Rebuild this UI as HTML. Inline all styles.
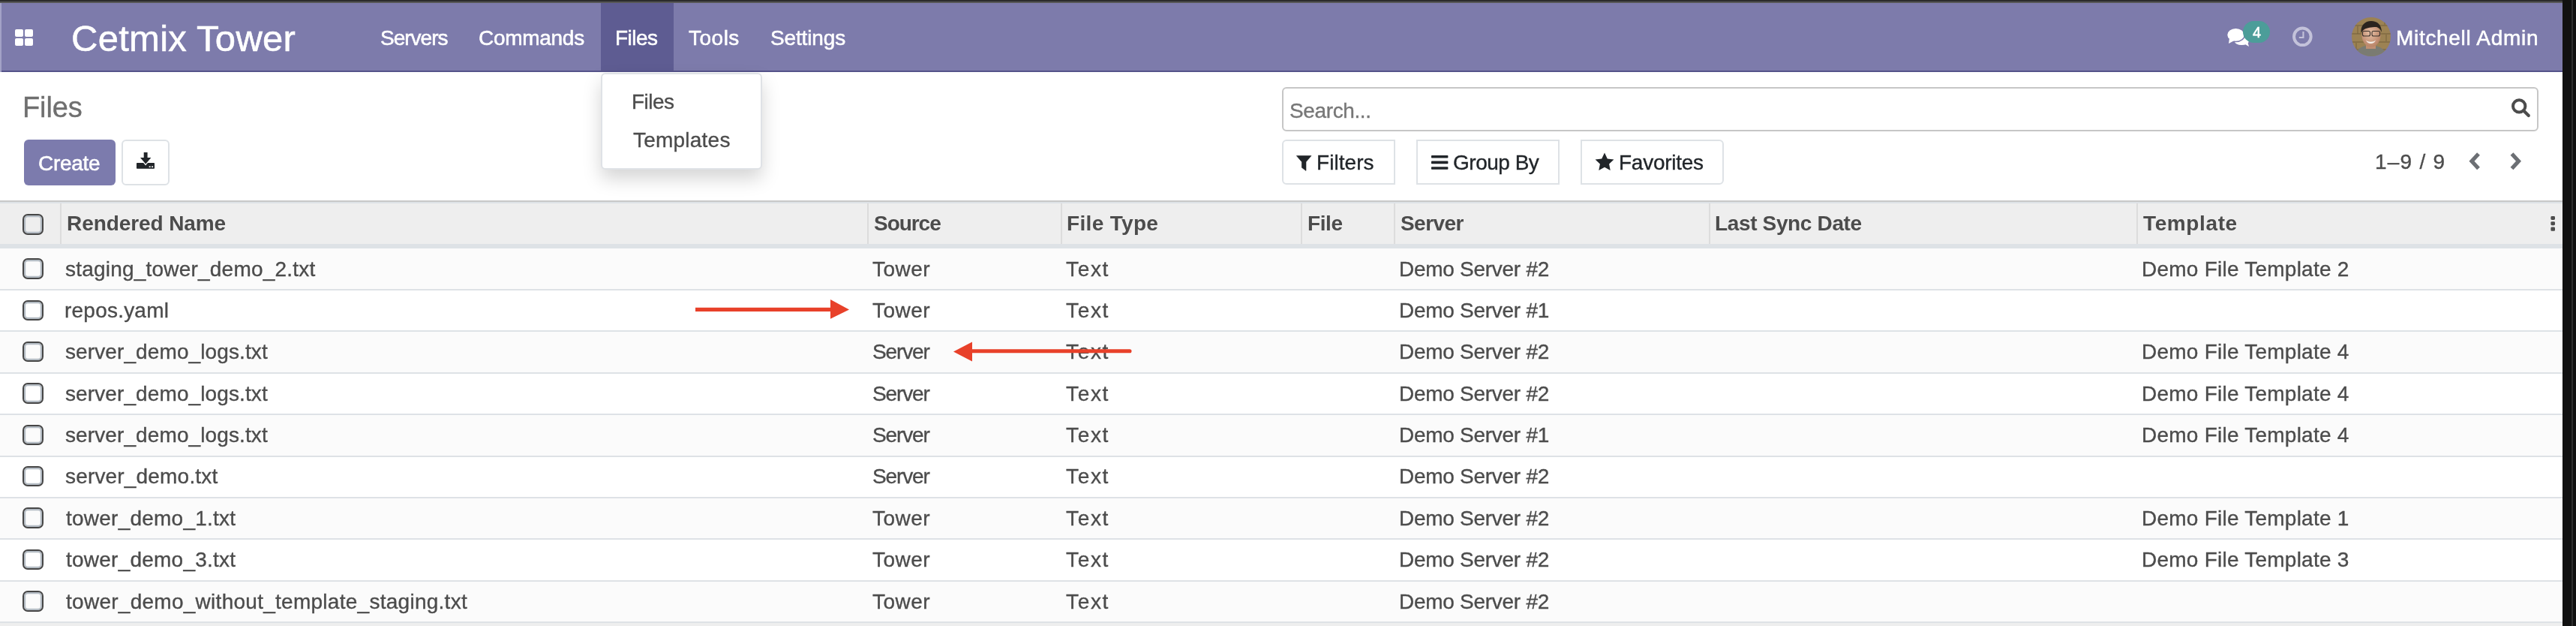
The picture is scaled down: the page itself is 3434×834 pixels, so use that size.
<!DOCTYPE html>
<html><head><meta charset="utf-8"><style>
html,body{margin:0;padding:0;width:3434px;height:834px;overflow:hidden;background:#fff;}
body{position:relative;font-family:"Liberation Sans",sans-serif;}
.a{position:absolute;}
.t{position:absolute;white-space:pre;font-family:"Liberation Sans",sans-serif;will-change:transform;}
</style></head><body>
<div class="a" style="left:0px;top:0px;width:3434px;height:2px;background:#2b2b2b"></div>
<div class="a" style="left:0px;top:2px;width:3434px;height:2px;background:#565656"></div>
<div class="a" style="left:3416px;top:0px;width:18px;height:834px;background:#111"></div>
<div class="a" style="left:3428px;top:0px;width:2px;height:834px;background:#2e2e2e"></div>
<div class="a" style="left:0px;top:4px;width:3416px;height:90px;background:#7D7BAB"></div>
<div class="a" style="left:0px;top:94px;width:3416px;height:2px;background:#55538A"></div>
<div class="a" style="left:801px;top:4px;width:97px;height:90px;background:#5E5C92"></div>
<div class="a" style="left:0px;top:4px;width:2px;height:92px;background:#a3a2c6"></div>
<div class="a" style="left:20px;top:39px;width:11px;height:10px;background:#fff;border-radius:2px"></div>
<div class="a" style="left:33px;top:39px;width:11px;height:10px;background:#fff;border-radius:2px"></div>
<div class="a" style="left:20px;top:51px;width:11px;height:10px;background:#fff;border-radius:2px"></div>
<div class="a" style="left:33px;top:51px;width:11px;height:10px;background:#fff;border-radius:2px"></div>
<span class="t" style="left:95.00px;top:26.60px;font-size:49px;line-height:49px;color:#fff;-webkit-text-stroke:0.55px currentColor;letter-spacing:0.273px;">Cetmix Tower</span><span class="t" style="left:507.00px;top:37.00px;font-size:28px;line-height:28px;color:#fff;-webkit-text-stroke:0.55px currentColor;letter-spacing:-1.000px;">Servers</span><span class="t" style="left:638.00px;top:37.00px;font-size:28px;line-height:28px;color:#fff;-webkit-text-stroke:0.55px currentColor;letter-spacing:-0.286px;">Commands</span><span class="t" style="left:820.00px;top:37.00px;font-size:28px;line-height:28px;color:#fff;-webkit-text-stroke:0.55px currentColor;letter-spacing:-0.500px;">Files</span><span class="t" style="left:918.00px;top:37.00px;font-size:28px;line-height:28px;color:#fff;-webkit-text-stroke:0.55px currentColor;letter-spacing:0.500px;">Tools</span><span class="t" style="left:1027.00px;top:37.00px;font-size:28px;line-height:28px;color:#fff;-webkit-text-stroke:0.55px currentColor;letter-spacing:-0.143px;">Settings</span><svg class="a" style="left:2966px;top:34px" width="36" height="32" viewBox="0 0 36 32">
<ellipse cx="22.3" cy="20.8" rx="9.6" ry="5.3" fill="#fff"/>
<path d="M26.5 24.8L32 28 30.2 22z" fill="#fff"/>
<ellipse cx="14.45" cy="12.4" rx="11.9" ry="9.2" fill="#fff" stroke="#7D7BAB" stroke-width="1.5"/>
<path d="M6 17L5 23.9 12.5 20z" fill="#fff"/>
</svg>
<div class="a" style="left:2990px;top:28px;width:36px;height:29px;background:#4C9D99;border-radius:15px"></div>
<span class="t" style="left:3003.00px;top:33.30px;font-size:20px;line-height:20px;color:#fff;-webkit-text-stroke:0.55px currentColor;">4</span><svg class="a" style="left:3054px;top:33px" width="32" height="32" viewBox="0 0 32 32">
<circle cx="15.35" cy="15.8" r="11.3" fill="none" stroke="#C3C2DA" stroke-width="4"/>
<path d="M16.45 9.1v7.9h-5.65" fill="none" stroke="#C3C2DA" stroke-width="2.1"/>
</svg>
<svg class="a" style="left:3135px;top:23px" width="52" height="52" viewBox="0 0 52 52">
<defs><clipPath id="av"><circle cx="26" cy="26" r="26"/></clipPath>
<radialGradient id="fg" cx=".45" cy=".4" r=".6"><stop offset="0" stop-color="#e7c0a6"/><stop offset="1" stop-color="#b98468"/></radialGradient></defs>
<g clip-path="url(#av)">
<rect width="52" height="52" fill="#9c8253"/>
<path d="M0 10h52v2H0zM0 21h52v2H0zM0 32h52v2H0zM0 42h52v2H0z" fill="#6f5a38" opacity=".45"/>
<path d="M8 12v10M44 0v10M6 34v8M46 23v9" stroke="#6f5a38" stroke-width="1.6" opacity=".5"/>
<path d="M4 52c1-7 7-13 15-14h12c8 1 14 6 17 14z" fill="#7a7b72"/>
<rect x="19" y="34" width="13" height="8" fill="#c08f72"/>
<ellipse cx="26" cy="24" rx="12.5" ry="15.5" fill="url(#fg)"/>
<path d="M12.5 21c-1-10 5-16 13.5-16 8 0 14 5 14 15-2-5-5-7-8-7-5 0-12 1-15 3-2 1-3 3-4.5 5z" fill="#2b241f"/>
<rect x="14.5" y="18.5" width="10" height="6.5" rx="2" fill="none" stroke="#3a322c" stroke-width="1.1"/>
<rect x="27" y="18.5" width="10.5" height="6.5" rx="2" fill="none" stroke="#3a322c" stroke-width="1.1"/>
<path d="M19 30.5c3 3 10 3 13 0-1 3-4 4.5-6.5 4.5S20 33.5 19 30.5z" fill="#f4efe9"/>
</g></svg>
<span class="t" style="left:3194.00px;top:36.80px;font-size:28px;line-height:28px;color:#fff;-webkit-text-stroke:0.55px currentColor;letter-spacing:0.692px;">Mitchell Admin</span><span class="t" style="left:30.00px;top:124.20px;font-size:38px;line-height:38px;color:#6f6f6f;-webkit-text-stroke:0.35px currentColor;letter-spacing:-0.100px;">Files</span><div class="a" style="left:32px;top:186px;width:122px;height:61px;background:#7C7BAD;border-radius:6px"></div>
<span class="t" style="left:51.40px;top:203.50px;font-size:28px;line-height:28px;color:#fff;-webkit-text-stroke:0.55px currentColor;letter-spacing:-0.280px;">Create</span><div class="a" style="left:162px;top:186px;width:63.5px;height:60.5px;background:#fff;border:2px solid #dee2e6;border-radius:6px;box-sizing:border-box"></div>
<svg class="a" style="left:180px;top:200px" width="28" height="28" viewBox="0 0 28 28">
<path fill="#212529" d="M11.7 3h4.9v7h4.8l-7.2 8.6-7.2-8.6h4.7z"/>
<path fill="#212529" d="M3 17.1h8.2l2.9 3.3 2.9-3.3H25c.6 0 1 .4 1 1v5.6c0 .6-.4 1-1 1H3c-.6 0-1-.4-1-1v-5.6c0-.6.4-1 1-1z"/>
<rect x="18.7" y="21.4" width="2" height="1.6" fill="#fff"/>
<rect x="22.1" y="21.4" width="2" height="1.6" fill="#fff"/>
</svg>
<div class="a" style="left:1708.6px;top:116px;width:1675.2px;height:58.5px;background:#fff;border:2px solid #c6c6c6;border-radius:6px;box-sizing:border-box"></div>
<span class="t" style="left:1719.20px;top:134.00px;font-size:28px;line-height:28px;color:#777;-webkit-text-stroke:0.35px currentColor;letter-spacing:-0.375px;">Search...</span><svg class="a" style="left:3344px;top:127px" width="32" height="32" viewBox="0 0 32 32">
<circle cx="14.2" cy="14.4" r="8.2" fill="none" stroke="#4c4c4c" stroke-width="4"/>
<path d="M20 20.2l6.8 6.8" stroke="#4c4c4c" stroke-width="4.2" stroke-linecap="round"/>
</svg>
<div class="a" style="left:1708.6px;top:186.2px;width:151px;height:60px;background:#fff;border:2px solid #dee2e6;border-radius:6px 0 0 6px;box-sizing:border-box"></div>
<div class="a" style="left:1888px;top:186.2px;width:191px;height:60px;background:#fff;border:2px solid #dee2e6;box-sizing:border-box"></div>
<div class="a" style="left:2107px;top:186.2px;width:191.4px;height:60px;background:#fff;border:2px solid #dee2e6;border-radius:0 6px 6px 0;box-sizing:border-box"></div>
<svg class="a" style="left:1727px;top:206px" width="22" height="22" viewBox="0 0 22 22">
<path fill="#212529" stroke="#212529" stroke-width=".6" stroke-linejoin="round" d="M1.4 1.6H21L14 9.7V21.4L8.4 17.3V9.7z"/>
</svg>
<svg class="a" style="left:1908px;top:207px" width="23" height="20" viewBox="0 0 23 20">
<rect x="0" y="0" width="22.4" height="3.6" rx=".8" fill="#212529"/>
<rect x="0" y="7.6" width="22.4" height="3.6" rx=".8" fill="#212529"/>
<rect x="0" y="15.2" width="22.4" height="3.6" rx=".8" fill="#212529"/>
</svg>
<svg class="a" style="left:2126.3px;top:203px" width="26" height="26" viewBox="0.55 0.45 24.9 24.9">
<path fill="#212529" d="M13 1l3.6 7.6 8.3 1-6.1 5.7 1.6 8.2L13 19.4l-7.4 4.1 1.6-8.2-6.1-5.7 8.3-1z"/>
</svg>
<span class="t" style="left:1754.90px;top:202.60px;font-size:28px;line-height:28px;color:#212529;-webkit-text-stroke:0.35px currentColor;letter-spacing:0.050px;">Filters</span><span class="t" style="left:1937.40px;top:202.70px;font-size:28px;line-height:28px;color:#212529;-webkit-text-stroke:0.35px currentColor;letter-spacing:-0.486px;">Group By</span><span class="t" style="left:2157.50px;top:202.70px;font-size:28px;line-height:28px;color:#212529;-webkit-text-stroke:0.35px currentColor;letter-spacing:-0.262px;">Favorites</span><span class="t" style="left:3165.60px;top:202.00px;font-size:28px;line-height:28px;color:#4c4c4c;-webkit-text-stroke:0.35px currentColor;letter-spacing:1.233px;">1–9 / 9</span><svg class="a" style="left:3288px;top:200px" width="80" height="30" viewBox="0 0 80 30">
<path d="M16 5L7 14.8 16 24.6" fill="none" stroke="#6c6f74" stroke-width="5.2"/>
<path d="M60.5 5l9 9.8-9 9.8" fill="none" stroke="#6c6f74" stroke-width="5.2"/>
</svg>
<div class="a" style="left:801px;top:97px;width:214.5px;height:129px;background:#fff;border:2px solid #dfe2e6;border-radius:6px;box-sizing:border-box;box-shadow:0 12px 24px rgba(0,0,0,.17)"></div>
<span class="t" style="left:842.40px;top:122.00px;font-size:28px;line-height:28px;color:#4c4c4c;-webkit-text-stroke:0.35px currentColor;letter-spacing:-0.500px;">Files</span><span class="t" style="left:843.90px;top:173.00px;font-size:28px;line-height:28px;color:#4c4c4c;-webkit-text-stroke:0.35px currentColor;letter-spacing:0.225px;">Templates</span><div class="a" style="left:0px;top:267px;width:3416px;height:2px;background:#c8c8c8"></div>
<div class="a" style="left:0px;top:269px;width:3416px;height:2px;background:#dee2e6"></div>
<div class="a" style="left:0px;top:271px;width:3416px;height:54px;background:#eeeeee"></div>
<div class="a" style="left:0px;top:325px;width:3416px;height:6px;background:#dee2e6"></div>
<div class="a" style="left:80px;top:271px;width:2px;height:54px;background:#dcdcdc"></div>
<div class="a" style="left:1156px;top:271px;width:2px;height:54px;background:#dcdcdc"></div>
<div class="a" style="left:1414px;top:271px;width:2px;height:54px;background:#dcdcdc"></div>
<div class="a" style="left:1734px;top:271px;width:2px;height:54px;background:#dcdcdc"></div>
<div class="a" style="left:1858px;top:271px;width:2px;height:54px;background:#dcdcdc"></div>
<div class="a" style="left:2278px;top:271px;width:2px;height:54px;background:#dcdcdc"></div>
<div class="a" style="left:2848px;top:271px;width:2px;height:54px;background:#dcdcdc"></div>
<div class="a" style="left:30.2px;top:285.2px;width:27.4px;height:27.4px;border:2.6px solid #464646;border-radius:7px;box-sizing:border-box;box-shadow:inset 0 0 0 2.2px #b4bcc4;background:transparent"></div>
<span class="t" style="left:88.50px;top:284.20px;font-size:28px;line-height:28px;color:#4c4c4c;font-weight:bold;letter-spacing:-0.083px;">Rendered Name</span><span class="t" style="left:1165.00px;top:284.20px;font-size:28px;line-height:28px;color:#4c4c4c;font-weight:bold;letter-spacing:-1.040px;">Source</span><span class="t" style="left:1422.40px;top:284.20px;font-size:28px;line-height:28px;color:#4c4c4c;font-weight:bold;letter-spacing:0.325px;">File Type</span><span class="t" style="left:1742.80px;top:284.20px;font-size:28px;line-height:28px;color:#4c4c4c;font-weight:bold;letter-spacing:-0.400px;">File</span><span class="t" style="left:1866.80px;top:284.20px;font-size:28px;line-height:28px;color:#4c4c4c;font-weight:bold;letter-spacing:-0.560px;">Server</span><span class="t" style="left:2286.00px;top:284.20px;font-size:28px;line-height:28px;color:#4c4c4c;font-weight:bold;letter-spacing:-0.354px;">Last Sync Date</span><span class="t" style="left:2857.20px;top:284.20px;font-size:28px;line-height:28px;color:#4c4c4c;font-weight:bold;letter-spacing:0.614px;">Template</span><svg class="a" style="left:3399px;top:286px" width="9" height="24" viewBox="0 0 9 24">
<rect x="1.4" y="2" width="5.6" height="5" rx="1.4" fill="#4c4c4c"/>
<rect x="1.4" y="9.2" width="5.6" height="5" rx="1.4" fill="#4c4c4c"/>
<rect x="1.4" y="16.4" width="5.6" height="5.4" rx="1.4" fill="#4c4c4c"/>
</svg>
<div class="a" style="left:0px;top:331.0px;width:3416px;height:55.38px;background:#fbfbfb"></div>
<div class="a" style="left:30.2px;top:344.2px;width:27.4px;height:27.4px;border:2.6px solid #464646;border-radius:7px;box-sizing:border-box;box-shadow:inset 0 0 0 2.2px #b4bcc4;background:transparent"></div>
<span class="t" style="left:87.40px;top:344.50px;font-size:28px;line-height:28px;color:#4c4c4c;-webkit-text-stroke:0.35px currentColor;letter-spacing:0.209px;">staging_tower_demo_2.txt</span><span class="t" style="left:1163.40px;top:344.50px;font-size:28px;line-height:28px;color:#4c4c4c;-webkit-text-stroke:0.35px currentColor;letter-spacing:0.475px;">Tower</span><span class="t" style="left:1421.00px;top:344.50px;font-size:28px;line-height:28px;color:#4c4c4c;-webkit-text-stroke:0.35px currentColor;letter-spacing:1.667px;">Text</span><span class="t" style="left:1864.60px;top:344.50px;font-size:28px;line-height:28px;color:#4c4c4c;-webkit-text-stroke:0.35px currentColor;letter-spacing:-0.277px;">Demo Server #2</span><span class="t" style="left:2854.50px;top:344.50px;font-size:28px;line-height:28px;color:#4c4c4c;-webkit-text-stroke:0.35px currentColor;letter-spacing:0.237px;">Demo File Template 2</span><div class="a" style="left:0px;top:386.38px;width:3416px;height:55.38px;background:#ffffff"></div>
<div class="a" style="left:30.2px;top:399.57px;width:27.4px;height:27.4px;border:2.6px solid #464646;border-radius:7px;box-sizing:border-box;box-shadow:inset 0 0 0 2.2px #b4bcc4;background:transparent"></div>
<span class="t" style="left:86.40px;top:399.88px;font-size:28px;line-height:28px;color:#4c4c4c;-webkit-text-stroke:0.35px currentColor;letter-spacing:0.222px;">repos.yaml</span><span class="t" style="left:1163.40px;top:399.88px;font-size:28px;line-height:28px;color:#4c4c4c;-webkit-text-stroke:0.35px currentColor;letter-spacing:0.475px;">Tower</span><span class="t" style="left:1421.00px;top:399.88px;font-size:28px;line-height:28px;color:#4c4c4c;-webkit-text-stroke:0.35px currentColor;letter-spacing:1.667px;">Text</span><span class="t" style="left:1864.60px;top:399.88px;font-size:28px;line-height:28px;color:#4c4c4c;-webkit-text-stroke:0.35px currentColor;letter-spacing:-0.277px;">Demo Server #1</span><div class="a" style="left:0px;top:441.75px;width:3416px;height:55.38px;background:#fbfbfb"></div>
<div class="a" style="left:30.2px;top:454.95px;width:27.4px;height:27.4px;border:2.6px solid #464646;border-radius:7px;box-sizing:border-box;box-shadow:inset 0 0 0 2.2px #b4bcc4;background:transparent"></div>
<span class="t" style="left:87.40px;top:455.25px;font-size:28px;line-height:28px;color:#4c4c4c;-webkit-text-stroke:0.35px currentColor;letter-spacing:0.105px;">server_demo_logs.txt</span><span class="t" style="left:1162.90px;top:455.25px;font-size:28px;line-height:28px;color:#4c4c4c;-webkit-text-stroke:0.35px currentColor;letter-spacing:-1.120px;">Server</span><span class="t" style="left:1421.00px;top:455.25px;font-size:28px;line-height:28px;color:#4c4c4c;-webkit-text-stroke:0.35px currentColor;letter-spacing:1.667px;">Text</span><span class="t" style="left:1864.60px;top:455.25px;font-size:28px;line-height:28px;color:#4c4c4c;-webkit-text-stroke:0.35px currentColor;letter-spacing:-0.277px;">Demo Server #2</span><span class="t" style="left:2854.50px;top:455.25px;font-size:28px;line-height:28px;color:#4c4c4c;-webkit-text-stroke:0.35px currentColor;letter-spacing:0.237px;">Demo File Template 4</span><div class="a" style="left:0px;top:497.12px;width:3416px;height:55.38px;background:#ffffff"></div>
<div class="a" style="left:30.2px;top:510.32px;width:27.4px;height:27.4px;border:2.6px solid #464646;border-radius:7px;box-sizing:border-box;box-shadow:inset 0 0 0 2.2px #b4bcc4;background:transparent"></div>
<span class="t" style="left:87.40px;top:510.62px;font-size:28px;line-height:28px;color:#4c4c4c;-webkit-text-stroke:0.35px currentColor;letter-spacing:0.105px;">server_demo_logs.txt</span><span class="t" style="left:1162.90px;top:510.62px;font-size:28px;line-height:28px;color:#4c4c4c;-webkit-text-stroke:0.35px currentColor;letter-spacing:-1.120px;">Server</span><span class="t" style="left:1421.00px;top:510.62px;font-size:28px;line-height:28px;color:#4c4c4c;-webkit-text-stroke:0.35px currentColor;letter-spacing:1.667px;">Text</span><span class="t" style="left:1864.60px;top:510.62px;font-size:28px;line-height:28px;color:#4c4c4c;-webkit-text-stroke:0.35px currentColor;letter-spacing:-0.277px;">Demo Server #2</span><span class="t" style="left:2854.50px;top:510.62px;font-size:28px;line-height:28px;color:#4c4c4c;-webkit-text-stroke:0.35px currentColor;letter-spacing:0.237px;">Demo File Template 4</span><div class="a" style="left:0px;top:552.5px;width:3416px;height:55.38px;background:#fbfbfb"></div>
<div class="a" style="left:30.2px;top:565.7px;width:27.4px;height:27.4px;border:2.6px solid #464646;border-radius:7px;box-sizing:border-box;box-shadow:inset 0 0 0 2.2px #b4bcc4;background:transparent"></div>
<span class="t" style="left:87.40px;top:566.00px;font-size:28px;line-height:28px;color:#4c4c4c;-webkit-text-stroke:0.35px currentColor;letter-spacing:0.105px;">server_demo_logs.txt</span><span class="t" style="left:1162.90px;top:566.00px;font-size:28px;line-height:28px;color:#4c4c4c;-webkit-text-stroke:0.35px currentColor;letter-spacing:-1.120px;">Server</span><span class="t" style="left:1421.00px;top:566.00px;font-size:28px;line-height:28px;color:#4c4c4c;-webkit-text-stroke:0.35px currentColor;letter-spacing:1.667px;">Text</span><span class="t" style="left:1864.60px;top:566.00px;font-size:28px;line-height:28px;color:#4c4c4c;-webkit-text-stroke:0.35px currentColor;letter-spacing:-0.277px;">Demo Server #1</span><span class="t" style="left:2854.50px;top:566.00px;font-size:28px;line-height:28px;color:#4c4c4c;-webkit-text-stroke:0.35px currentColor;letter-spacing:0.237px;">Demo File Template 4</span><div class="a" style="left:0px;top:607.88px;width:3416px;height:55.38px;background:#ffffff"></div>
<div class="a" style="left:30.2px;top:621.08px;width:27.4px;height:27.4px;border:2.6px solid #464646;border-radius:7px;box-sizing:border-box;box-shadow:inset 0 0 0 2.2px #b4bcc4;background:transparent"></div>
<span class="t" style="left:87.40px;top:621.38px;font-size:28px;line-height:28px;color:#4c4c4c;-webkit-text-stroke:0.35px currentColor;letter-spacing:0.179px;">server_demo.txt</span><span class="t" style="left:1162.90px;top:621.38px;font-size:28px;line-height:28px;color:#4c4c4c;-webkit-text-stroke:0.35px currentColor;letter-spacing:-1.120px;">Server</span><span class="t" style="left:1421.00px;top:621.38px;font-size:28px;line-height:28px;color:#4c4c4c;-webkit-text-stroke:0.35px currentColor;letter-spacing:1.667px;">Text</span><span class="t" style="left:1864.60px;top:621.38px;font-size:28px;line-height:28px;color:#4c4c4c;-webkit-text-stroke:0.35px currentColor;letter-spacing:-0.277px;">Demo Server #2</span><div class="a" style="left:0px;top:663.25px;width:3416px;height:55.38px;background:#fbfbfb"></div>
<div class="a" style="left:30.2px;top:676.45px;width:27.4px;height:27.4px;border:2.6px solid #464646;border-radius:7px;box-sizing:border-box;box-shadow:inset 0 0 0 2.2px #b4bcc4;background:transparent"></div>
<span class="t" style="left:88.40px;top:676.75px;font-size:28px;line-height:28px;color:#4c4c4c;-webkit-text-stroke:0.35px currentColor;letter-spacing:0.233px;">tower_demo_1.txt</span><span class="t" style="left:1163.40px;top:676.75px;font-size:28px;line-height:28px;color:#4c4c4c;-webkit-text-stroke:0.35px currentColor;letter-spacing:0.475px;">Tower</span><span class="t" style="left:1421.00px;top:676.75px;font-size:28px;line-height:28px;color:#4c4c4c;-webkit-text-stroke:0.35px currentColor;letter-spacing:1.667px;">Text</span><span class="t" style="left:1864.60px;top:676.75px;font-size:28px;line-height:28px;color:#4c4c4c;-webkit-text-stroke:0.35px currentColor;letter-spacing:-0.277px;">Demo Server #2</span><span class="t" style="left:2854.50px;top:676.75px;font-size:28px;line-height:28px;color:#4c4c4c;-webkit-text-stroke:0.35px currentColor;letter-spacing:0.237px;">Demo File Template 1</span><div class="a" style="left:0px;top:718.62px;width:3416px;height:55.38px;background:#ffffff"></div>
<div class="a" style="left:30.2px;top:731.83px;width:27.4px;height:27.4px;border:2.6px solid #464646;border-radius:7px;box-sizing:border-box;box-shadow:inset 0 0 0 2.2px #b4bcc4;background:transparent"></div>
<span class="t" style="left:88.40px;top:732.12px;font-size:28px;line-height:28px;color:#4c4c4c;-webkit-text-stroke:0.35px currentColor;letter-spacing:0.233px;">tower_demo_3.txt</span><span class="t" style="left:1163.40px;top:732.12px;font-size:28px;line-height:28px;color:#4c4c4c;-webkit-text-stroke:0.35px currentColor;letter-spacing:0.475px;">Tower</span><span class="t" style="left:1421.00px;top:732.12px;font-size:28px;line-height:28px;color:#4c4c4c;-webkit-text-stroke:0.35px currentColor;letter-spacing:1.667px;">Text</span><span class="t" style="left:1864.60px;top:732.12px;font-size:28px;line-height:28px;color:#4c4c4c;-webkit-text-stroke:0.35px currentColor;letter-spacing:-0.277px;">Demo Server #2</span><span class="t" style="left:2854.50px;top:732.12px;font-size:28px;line-height:28px;color:#4c4c4c;-webkit-text-stroke:0.35px currentColor;letter-spacing:0.237px;">Demo File Template 3</span><div class="a" style="left:0px;top:774.0px;width:3416px;height:55.38px;background:#fbfbfb"></div>
<div class="a" style="left:30.2px;top:787.2px;width:27.4px;height:27.4px;border:2.6px solid #464646;border-radius:7px;box-sizing:border-box;box-shadow:inset 0 0 0 2.2px #b4bcc4;background:transparent"></div>
<span class="t" style="left:88.40px;top:787.50px;font-size:28px;line-height:28px;color:#4c4c4c;-webkit-text-stroke:0.35px currentColor;letter-spacing:0.268px;">tower_demo_without_template_staging.txt</span><span class="t" style="left:1163.40px;top:787.50px;font-size:28px;line-height:28px;color:#4c4c4c;-webkit-text-stroke:0.35px currentColor;letter-spacing:0.475px;">Tower</span><span class="t" style="left:1421.00px;top:787.50px;font-size:28px;line-height:28px;color:#4c4c4c;-webkit-text-stroke:0.35px currentColor;letter-spacing:1.667px;">Text</span><span class="t" style="left:1864.60px;top:787.50px;font-size:28px;line-height:28px;color:#4c4c4c;-webkit-text-stroke:0.35px currentColor;letter-spacing:-0.277px;">Demo Server #2</span><div class="a" style="left:0px;top:385.0px;width:3416px;height:2px;background:#dee2e6"></div>
<div class="a" style="left:0px;top:440.38px;width:3416px;height:2px;background:#dee2e6"></div>
<div class="a" style="left:0px;top:495.75px;width:3416px;height:2px;background:#dee2e6"></div>
<div class="a" style="left:0px;top:551.12px;width:3416px;height:2px;background:#dee2e6"></div>
<div class="a" style="left:0px;top:606.5px;width:3416px;height:2px;background:#dee2e6"></div>
<div class="a" style="left:0px;top:661.88px;width:3416px;height:2px;background:#dee2e6"></div>
<div class="a" style="left:0px;top:717.25px;width:3416px;height:2px;background:#dee2e6"></div>
<div class="a" style="left:0px;top:772.62px;width:3416px;height:2px;background:#dee2e6"></div>
<div class="a" style="left:0px;top:828.0px;width:3416px;height:2px;background:#dee2e6"></div>
<div class="a" style="left:0px;top:830px;width:3416px;height:4px;background:#eeeeee"></div>
<svg class="a" style="left:0;top:0" width="3434" height="834" viewBox="0 0 3434 834">
<rect x="927" y="409.8" width="182" height="5.2" fill="#E8412A"/>
<path d="M1107 399L1132 412.4 1107 424.8z" fill="#E8412A"/>
<path d="M1295.8 465.2H1506a2.55 2.55 0 0 1 0 5.1H1295.8z" fill="#E8412A"/>
<path d="M1271 468.5L1296 455.6V481.4z" fill="#E8412A"/>
</svg>
</body></html>
